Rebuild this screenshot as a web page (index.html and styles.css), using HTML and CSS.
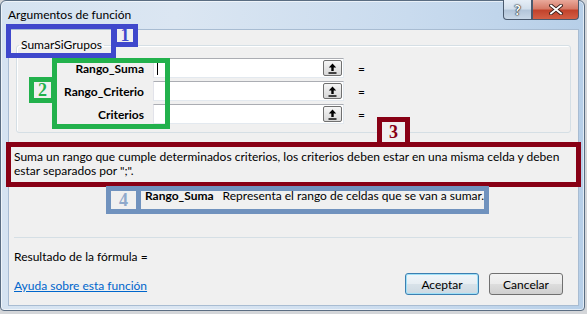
FILE: index.html
```html
<!DOCTYPE html>
<html lang="es">
  <head>
    <meta charset="UTF-8" />
    <title>Argumentos de función</title>
    <link rel="stylesheet" href="styles.css" />
  </head>
  <body>
    <!-- WINDOW ============ -->
    <div class="window">
      <!-- TITLE BAR ============ -->
      <div class="titlebar">
        <span class="title">Argumentos de función</span>
        <div class="caption-buttons">
          <button class="cap-help">?</button>
          <button class="cap-close">
            <svg viewBox="0 0 14 11" width="14" height="11">
              <path d="M2 1.5 L12 9.5 M12 1.5 L2 9.5" stroke="#3b1f1a" stroke-width="3.6" stroke-linecap="square" />
              <path d="M2 1.5 L12 9.5 M12 1.5 L2 9.5" stroke="#fff" stroke-width="1.8" stroke-linecap="square" />
            </svg>
          </button>
        </div>
      </div>

      <!-- CLIENT ============ -->
      <div class="client">
        <fieldset class="func-group">
          <legend>SumarSiGrupos</legend>

          <div class="arg-row">
            <label>Rango_Suma</label>
            <div class="arg-input">
              <span class="caret"></span>
              <button class="ref-btn">
                <svg viewBox="0 0 9 11" width="9" height="11">
                  <path d="M4.5 0.5 L0.8 4.6 H3.3 V8 H5.7 V4.6 H8.2 Z" fill="#000" />
                  <rect x="0.5" y="9.3" width="8" height="1.4" fill="#000" />
                </svg>
              </button>
            </div>
            <span class="eq">=</span>
          </div>

          <div class="arg-row">
            <label>Rango_Criterio</label>
            <div class="arg-input">
              <button class="ref-btn">
                <svg viewBox="0 0 9 11" width="9" height="11">
                  <path d="M4.5 0.5 L0.8 4.6 H3.3 V8 H5.7 V4.6 H8.2 Z" fill="#000" />
                  <rect x="0.5" y="9.3" width="8" height="1.4" fill="#000" />
                </svg>
              </button>
            </div>
            <span class="eq">=</span>
          </div>

          <div class="arg-row">
            <label>Criterios</label>
            <div class="arg-input">
              <button class="ref-btn">
                <svg viewBox="0 0 9 11" width="9" height="11">
                  <path d="M4.5 0.5 L0.8 4.6 H3.3 V8 H5.7 V4.6 H8.2 Z" fill="#000" />
                  <rect x="0.5" y="9.3" width="8" height="1.4" fill="#000" />
                </svg>
              </button>
            </div>
            <span class="eq">=</span>
          </div>
        </fieldset>

        <p class="func-desc">
          Suma un rango que cumple determinados criterios, los criterios deben estar en una misma celda y deben
          estar separados por ";".
        </p>

        <div class="arg-desc">
          <b>Rango_Suma</b>
          <span>Representa el rango de celdas que se van a sumar.</span>
        </div>

        <div class="separator"></div>

        <!-- FOOTER ============ -->
        <div class="footer">
          <div class="footer-left">
            <span>Resultado de la fórmula =</span>
            <a href="#" class="help-link">Ayuda sobre esta función</a>
          </div>
          <div class="footer-buttons">
            <button class="btn btn-default">Aceptar</button>
            <button class="btn">Cancelar</button>
          </div>
        </div>
      </div>

      <!-- ANNOTATIONS ============ -->
      <div class="note note-1"></div>
      <div class="note-num num-1">1</div>
      <div class="note note-2"></div>
      <div class="note-num num-2">2</div>
      <div class="note note-3"></div>
      <div class="note-num num-3">3</div>
      <div class="note note-4">
        <div class="note-cell">4</div>
      </div>
    </div>
  </body>
</html>
```

FILE: styles.css
```css
/* GLOBAL ============ */

* {
  box-sizing: border-box;
  margin: 0;
  padding: 0;
}

body {
  width: 587px;
  height: 314px;
  overflow: hidden;
  background: #d4d6d9;
  font-family: Lato, 'Liberation Sans', sans-serif;
  font-size: 12px;
  color: #000;
}

button {
  font-family: inherit;
  font-size: 12px;
}

/* WINDOW ============ */

.window {
  position: relative;
  width: 585px;
  height: 311px;
  padding: 0 5px 5px 7px;
  border: 1px solid #5a6d82;
  border-radius: 6px 6px 4px 4px;
  background: linear-gradient(90deg, #d5e3f1 0%, #dbe6f2 30%, #c9dbee 70%, #b7cfe8 100%);
  box-shadow: inset 0 0 0 1px rgba(255, 255, 255, 0.6);
}

.titlebar {
  height: 28px;
  display: flex;
  justify-content: space-between;
  align-items: flex-start;
}

.title {
  margin-top: 7px;
  line-height: 14px;
  color: #000;
}

.caption-buttons {
  display: flex;
  margin-top: -1px;
}

.caption-buttons button {
  height: 20px;
  border: 1px solid #4a5a6e;
  border-top: none;
  display: flex;
  align-items: center;
  justify-content: center;
}

.cap-help {
  width: 29px;
  border-radius: 0 0 0 4px;
  background: linear-gradient(#e6eef7 0%, #d3dfec 45%, #b3c6da 55%, #c9d8e8 100%);
  color: #fff;
  font-weight: bold;
  font-size: 14px;
  text-shadow: 0 0 1px #222, 0 0 1px #222, 0 0 2px #222;
}

.cap-close {
  width: 47px;
  border-left: none;
  border-radius: 0 0 4px 0;
  background: linear-gradient(#e9a99b 0%, #d67b68 45%, #c2432c 55%, #d35f45 100%);
}

/* CLIENT ============ */

.client {
  height: 277px;
  background: #f0f0f0;
  border: 1px solid #a8bcd2;
  display: flex;
  flex-direction: column;
}

.func-group {
  margin: 8px 7px 0 7px;
  padding: 6px 0 8px 0;
  border: 1px solid #d5dfe5;
  border-radius: 3px;
  box-shadow: inset 1px 1px 0 #fff;
}

.func-group legend {
  margin-left: 2px;
  padding: 0 2px;
  line-height: 14px;
}

.arg-row {
  display: grid;
  grid-template-columns: 127px 191px auto;
  column-gap: 9px;
  align-items: center;
  height: 20px;
}

.arg-row + .arg-row {
  margin-top: 3px;
}

.arg-row label {
  text-align: right;
  font-weight: bold;
}

.arg-input {
  position: relative;
  height: 20px;
  background: #fff;
  border: 1px solid #abadb3;
  border-color: #abadb3 #e3e9ef #e3e9ef #e2e3ea;
  display: flex;
  align-items: center;
  justify-content: flex-end;
  padding-right: 1px;
}

.caret {
  position: absolute;
  left: 3px;
  top: 2px;
  width: 1px;
  height: 14px;
  background: #000;
}

.ref-btn {
  width: 19px;
  height: 16px;
  border: 1px solid #707070;
  border-radius: 2px;
  background: linear-gradient(#f6f6f6 0%, #e6e6e6 50%, #d8d8d8 100%);
  display: flex;
  align-items: center;
  justify-content: center;
}

.eq {
  margin-left: 5px;
}

.func-desc {
  margin-top: 17px;
  padding: 0 5px;
  line-height: 14px;
}

.arg-desc {
  margin-top: 11px;
  padding-left: 136px;
  line-height: 14px;
  display: flex;
  gap: 9px;
}

.separator {
  margin: 34px 6px 0 5px;
  height: 1px;
  background: #d5dfe5;
}

/* FOOTER ============ */

.footer {
  margin-top: 12px;
  padding: 0 15px 0 5px;
  display: flex;
  justify-content: space-between;
  align-items: flex-end;
}

.footer-left {
  display: flex;
  flex-direction: column;
  gap: 15px;
  line-height: 14px;
  padding-bottom: 2px;
}

.help-link {
  color: #0066cc;
  text-decoration: underline;
}

.footer-buttons {
  display: flex;
  gap: 10px;
}

.btn {
  width: 74px;
  height: 22px;
  border: 1px solid #707070;
  border-radius: 3px;
  background: linear-gradient(#f2f2f2 0%, #ebebeb 48%, #dddddd 52%, #cfcfcf 100%);
  color: #000;
}

.btn-default {
  border-color: #3c7fb1;
  box-shadow: inset 0 0 0 1px #9fe0f7;
  background: linear-gradient(#f0f6fa 0%, #e7eef3 48%, #d8e2e9 52%, #cdd9e2 100%);
}

/* ANNOTATIONS ============ */

.note {
  position: absolute;
  border: 5px solid;
}

.note-num {
  position: absolute;
  border: 5px solid;
  background: #f0f0f0;
  font-family: 'Liberation Serif', 'DejaVu Serif', serif;
  font-size: 18px;
  font-weight: bold;
  display: flex;
  align-items: center;
  justify-content: center;
}

.note-1 {
  left: 5px;
  top: 23px;
  width: 110px;
  height: 34px;
  border-color: #3f48cc;
}

.num-1 {
  left: 111px;
  top: 23px;
  width: 26px;
  height: 23px;
  border-color: #3f48cc;
  color: #3f48cc;
}

.note-2 {
  left: 51px;
  top: 57px;
  width: 118px;
  height: 71px;
  border-color: #22b14c;
}

.num-2 {
  left: 28px;
  top: 76px;
  width: 27px;
  height: 26px;
  border-color: #22b14c;
  color: #22b14c;
}

.note-3 {
  left: 5px;
  top: 141px;
  width: 575px;
  height: 45px;
  border-color: #880015;
}

.num-3 {
  left: 376px;
  top: 116px;
  width: 33px;
  height: 30px;
  border-color: #880015;
  color: #880015;
}

.note-4 {
  left: 105px;
  top: 185px;
  width: 383px;
  height: 28px;
  border-color: #7092be;
  display: flex;
}

.note-cell {
  width: 30px;
  height: 100%;
  border-right: 5px solid #7092be;
  color: #8fa9cc;
  font-family: 'Liberation Serif', 'DejaVu Serif', serif;
  font-size: 18px;
  font-weight: bold;
  display: flex;
  align-items: center;
  justify-content: center;
  background: #f0f0f0;
}
```
